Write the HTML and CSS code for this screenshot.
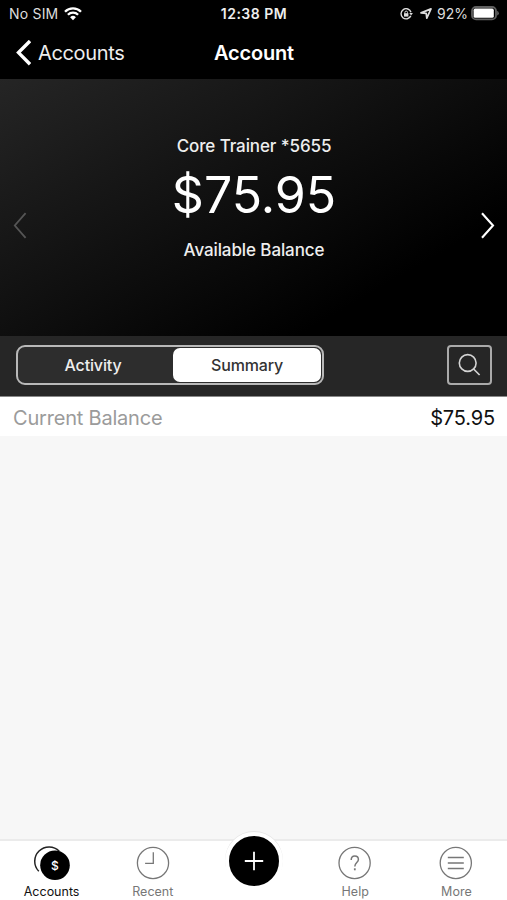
FILE: index.html
```html
<!DOCTYPE html>
<html lang="en">
<head>
  <meta charset="UTF-8">
  <meta name="viewport" content="width=device-width, initial-scale=1.0">
  <title>Account</title>
  <link rel="stylesheet" href="styles.css">
</head>
<body>
  <div class="app">
    <div class="status-bar">
      <div class="status-left">
        <span class="carrier">No SIM</span>
        <svg class="wifi" width="18" height="14" viewBox="0 0 18 14" fill="none" stroke="#fff" stroke-width="2.3">
          <path d="M1 4.7a11.3 11.3 0 0 1 16 0"/>
          <path d="M3.9 7.7a7.2 7.2 0 0 1 10.2 0"/>
          <path d="M9 13.3L6.1 10.3a4.1 4.1 0 0 1 5.8 0z" fill="#fff" stroke="none"/>
        </svg>
      </div>
      <div class="clock">12:38 PM</div>
      <div class="status-right">
        <svg class="lock" width="13" height="12" viewBox="0 0 13 12" fill="none" stroke="#ddd" stroke-width="1.4">
          <path d="M10.8 7.9A5.1 5.1 0 1 1 11 4.2"/>
          <path d="M9.3 5h3.6l-1.8 2.6z" fill="#ddd" stroke="none"/>
          <rect x="4" y="5.2" width="4.4" height="3.4" fill="#ddd" stroke="none"/>
          <path d="M4.9 5.5V4.4a1.3 1.3 0 0 1 2.6 0v1.1" stroke-width="1"/>
        </svg>
        <svg class="location" width="12" height="11" viewBox="0 0 12 11" fill="none" stroke="#ddd" stroke-width="1.7" stroke-linejoin="round">
          <path d="M1 4.9L11 .9 6.8 10.2 6.2 5.4z"/>
        </svg>
        <span class="percent">92%</span>
        <svg class="battery" width="28" height="15" viewBox="0 0 28 15">
          <rect x="1" y="1" width="24" height="12.4" rx="4" fill="none" stroke="#606060" stroke-width="1.8"/>
          <rect x="2.6" y="2.6" width="20.2" height="9.2" rx="1.6" fill="#fff"/>
          <path d="M26.2 4.8q1.6.8 1.6 2.4t-1.6 2.4z" fill="#666"/>
        </svg>
      </div>
    </div>

    <div class="nav-bar">
      <div class="back">
        <svg width="16" height="26" viewBox="0 0 16 26" fill="none" stroke="#fff" stroke-width="3.4">
          <path d="M15 1L3.5 12.6 15 24.2"/>
        </svg>
        <span class="back-label">Accounts</span>
      </div>
      <h1>Account</h1>
    </div>

    <div class="hero">
      <svg class="arrow" width="14" height="28" viewBox="0 0 14 28" fill="none" stroke="#555" stroke-width="1.8">
        <path d="M12.6 1.2L1.8 13.5l10.8 12.3"/>
      </svg>
      <div class="balance">
        <div class="account-name">Core Trainer *5655</div>
        <div class="amount">$75.95</div>
        <div class="balance-label">Available Balance</div>
      </div>
      <svg class="arrow" width="14" height="28" viewBox="0 0 14 28" fill="none" stroke="#fff" stroke-width="2.1">
        <path d="M1 1.2L12 13.5 1 25.8"/>
      </svg>
    </div>

    <div class="toolbar">
      <div class="segmented">
        <div class="segment"><span>Activity</span></div>
        <div class="segment selected"><span>Summary</span></div>
      </div>
      <div class="search">
        <svg width="24" height="24" viewBox="0 0 24 24" fill="none" stroke="#d4d4d4" stroke-width="1.6">
          <circle cx="9.7" cy="10" r="8.4"/>
          <path d="M15.6 16l6 6"/>
        </svg>
      </div>
    </div>

    <div class="row">
      <span class="row-label">Current Balance</span>
      <span class="row-value">$75.95</span>
    </div>

    <div class="content"></div>

    <div class="tab-bar">
      <div class="tab active">
        <svg width="38" height="38" viewBox="0 0 38 38">
          <path d="M5.8 25.3A14 14 0 1 1 26.3 5.3" fill="none" stroke="#222" stroke-width="1.5"/>
          <circle cx="22" cy="19.3" r="14.8" fill="#000"/>
          <text x="21.8" y="23.6" text-anchor="middle" class="dollar">$</text>
        </svg>
        <span class="tab-label">Accounts</span>
      </div>
      <div class="tab">
        <svg width="38" height="38" viewBox="0 0 38 38" fill="none" stroke="#777" stroke-width="1.3">
          <circle cx="19" cy="17" r="15.6"/>
          <path d="M19.3 6.3v11h-8.2"/>
        </svg>
        <span class="tab-label">Recent</span>
      </div>
      <div class="tab tab-add">
        <div class="add">
          <svg width="20" height="20" viewBox="0 0 20 20" stroke="#fff" stroke-width="1.8">
            <path d="M10 .8v18.4M.8 10h18.4"/>
          </svg>
        </div>
      </div>
      <div class="tab">
        <svg width="38" height="38" viewBox="0 0 38 38" fill="none" stroke="#777" stroke-width="1.3">
          <circle cx="18.6" cy="17" r="15.6"/>
          <path d="M15.2 13.9c0-2.6 1.5-4 3.6-4s3.6 1.4 3.6 3.6c0 3-3.6 3.2-3.6 7" stroke-width="1.5"/>
          <path d="M18.8 22.3v2" stroke-width="1.8"/>
        </svg>
        <span class="tab-label">Help</span>
      </div>
      <div class="tab">
        <svg width="38" height="38" viewBox="0 0 38 38" fill="none" stroke="#777" stroke-width="1.3">
          <circle cx="18.8" cy="17" r="15.6"/>
          <path d="M10.8 11.6h16M10.8 17h16M10.8 22.4h16" stroke-width="1.5"/>
        </svg>
        <span class="tab-label">More</span>
      </div>
    </div>
  </div>
</body>
</html>
```
FILE: styles.css
```css
* {
  box-sizing: border-box;
}
body {
  margin: 0;
  background-color: #f7f7f7;
  font-family: Inter, "Liberation Sans", sans-serif;
}
svg {
  display: block;
  flex-shrink: 0;
}
.app {
  display: flex;
  flex-direction: column;
  height: 900px;
}
.status-bar {
  display: grid;
  grid-template-columns: 1fr auto 1fr;
  align-items: center;
  height: 27px;
  padding: 0 8px 0 9px;
  background: #000;
  color: #ddd;
  font-size: 14px;
}
.status-left {
  display: flex;
  align-items: center;
  gap: 6px;
}
.carrier {
  letter-spacing: 0.2px;
}
.clock {
  color: #eee;
  font-weight: 600;
  letter-spacing: 0.5px;
}
.status-right {
  display: flex;
  align-items: center;
  justify-content: flex-end;
}
.location {
  margin: 0 5px 0 7px;
}
.battery {
  margin-left: 3px;
}
.nav-bar {
  display: grid;
  grid-template-columns: 1fr auto 1fr;
  align-items: center;
  height: 52px;
  padding: 0 14px 0 15px;
  background: #000;
  color: #fff;
}
.back {
  display: flex;
  align-items: center;
  gap: 7px;
  font-size: 20px;
  letter-spacing: -0.35px;
  color: #eee;
}
.nav-bar h1 {
  margin: 0;
  font-size: 20px;
  font-weight: 600;
  letter-spacing: -0.2px;
}
.hero {
  display: flex;
  align-items: center;
  justify-content: space-between;
  height: 257px;
  padding: 0 12px 0 13px;
  background: linear-gradient(150deg, #252525 0%, #111 42%, #000 78%);
  color: #fff;
}
.arrow {
  margin-top: 36px;
}
.balance {
  text-align: center;
  padding-bottom: 20px;
}
.account-name,
.balance-label {
  font-size: 17px;
  font-weight: 500;
  line-height: 22px;
  letter-spacing: -0.1px;
  color: #eee;
}
.amount {
  margin: 11px 0 16px;
  font-size: 50px;
  line-height: 55px;
}
.toolbar {
  display: flex;
  align-items: center;
  justify-content: space-between;
  height: 61px;
  padding: 0 15px 2px 16px;
  background: #262626;
  border-bottom: 1px solid #888;
}
.segmented {
  display: flex;
  width: 308px;
  height: 40px;
  padding: 1px;
  border: 2px solid #b8b8b8;
  border-radius: 9px;
  background: #2d2d2d;
}
.segment {
  display: flex;
  flex: 1;
  align-items: center;
  justify-content: center;
  padding-right: 6px;
  color: #eee;
  font-size: 16px;
  font-weight: 500;
  letter-spacing: -0.15px;
}
.segment.selected {
  flex: 0 0 148px;
  padding-right: 0;
  background: #fff;
  color: #333;
  border-radius: 7px;
}
.search {
  display: flex;
  align-items: center;
  justify-content: center;
  width: 45px;
  height: 40px;
  border: 2px solid #aaa;
  border-radius: 4px;
}
.row {
  display: flex;
  align-items: center;
  justify-content: space-between;
  height: 39px;
  padding: 2px 12px 0 13px;
  background: #fff;
  font-size: 20px;
}
.row-label {
  color: #9b9b9b;
  letter-spacing: -0.2px;
}
.row-value {
  color: #111;
  letter-spacing: -0.15px;
}
.content {
  flex: 1;
}
.tab-bar {
  display: grid;
  grid-template-columns: repeat(5, 1fr);
  height: 61px;
  padding-left: 1px;
  background: #fff;
  border-top: 2px solid #ebebeb;
}
.tab {
  display: flex;
  flex-direction: column;
  align-items: center;
  padding-top: 5px;
  color: #777;
  font-size: 12.5px;
}
.tab-label {
  line-height: 15px;
}
.tab.active {
  color: #111;
}
.dollar {
  fill: #fff;
  font-size: 12px;
  font-weight: 500;
}
.tab-add {
  padding-top: 0;
}
/* white ring lifts the button over the bar's top edge */
.add {
  display: flex;
  align-items: center;
  justify-content: center;
  width: 58px;
  height: 58px;
  margin-top: -9px;
  border: 4px solid #fff;
  border-radius: 50%;
  background: #000;
  box-shadow: 0 -1px 0 #e6e6e6;
}
```
